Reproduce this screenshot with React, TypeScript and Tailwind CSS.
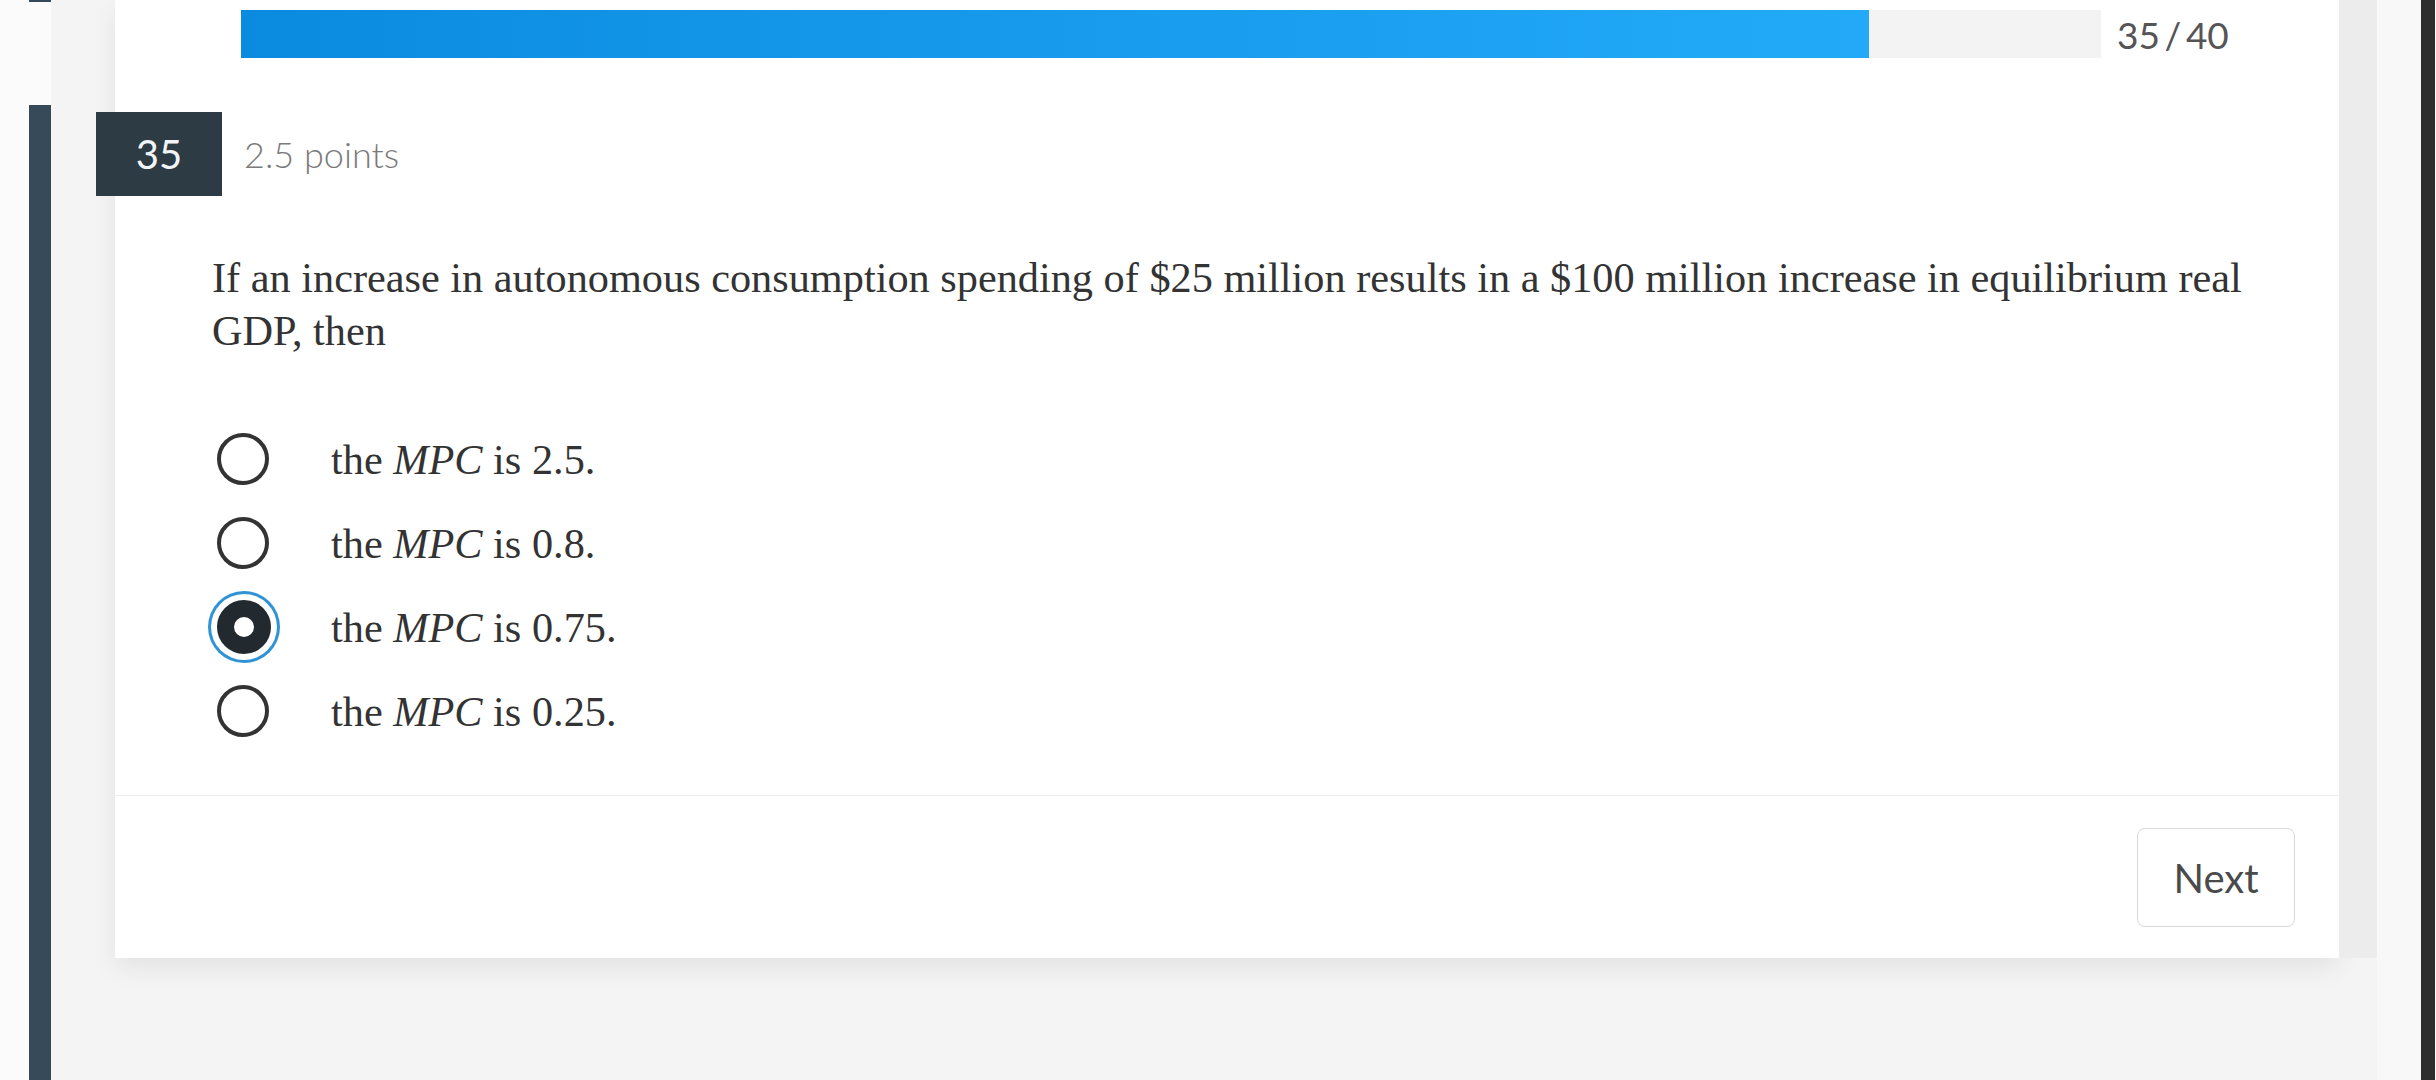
import React from 'react'

const options = [
  { id: 'a', value: '2.5', checked: false },
  { id: 'b', value: '0.8', checked: false },
  { id: 'c', value: '0.75', checked: true },
  { id: 'd', value: '0.25', checked: false },
]

const Radio: React.FC<{ checked: boolean }> = ({ checked }) =>
  checked ? (
    <span className="block h-[54px] w-[54px] shrink-0 rounded-full border-[17px] border-[#222a30] bg-white shadow-[0_0_0_6px_#ffffff,0_0_0_9px_#2f93d6]" />
  ) : (
    <span className="block h-[52px] w-[52px] shrink-0 rounded-full border-[4px] border-[#333333] bg-white" />
  )

export default function App() {
  const answered = 35
  const total = 40

  return (
    <div className="flex h-[1080px] w-[2436px] overflow-hidden bg-[#fbfbfb] font-['Lato',sans-serif]">
      {/* left strip */}
      <div className="w-[29px] shrink-0" />
      <div className="flex w-[22px] shrink-0 flex-col">
        <div className="h-[2px] bg-[#374a5a]" />
        <div className="h-[103px]" />
        <div className="flex-1 bg-[#374a5a]" />
      </div>

      {/* main area */}
      <main className="flex w-[2326px] shrink-0 items-start bg-[#f4f4f4] pl-[64px]">
        <div className="flex items-stretch">
          <div className="flex w-[2224px] flex-col bg-white shadow-[0_10px_24px_rgba(0,0,0,0.07)]">
            <div className="pb-[42px] pl-[97px] pr-[44px] pt-[10px]">
              {/* progress */}
              <div className="ml-[29px] flex h-[48px] items-center gap-[16px]">
                <div className="h-[48px] w-[1860px] bg-[#f3f3f3]">
                  <div
                    className="h-full bg-gradient-to-r from-[#0a8be0] to-[#22aaf8]"
                    style={{ width: `${(answered / total) * 100}%` }}
                  />
                </div>
                <span className="text-[37px] leading-none text-[#555555]">
                  {answered}&thinsp;/&thinsp;{total}
                </span>
              </div>

              {/* question header */}
              <div className="-ml-[116px] mt-[54px] flex h-[84px] items-center gap-[22px]">
                <div className="flex h-[84px] w-[126px] items-center justify-center bg-[#2d3b45] text-[40px] leading-none text-[#f2f5f7]">
                  35
                </div>
                <span className="text-[36px] font-light leading-none text-[#7a7a7a]">2.5 points</span>
              </div>

              {/* question text */}
              <p className="mt-[55px] font-['Liberation_Serif',serif] text-[42.3px] leading-[53px] text-[#333333]">
                If an increase in autonomous consumption spending of $25 million results in a $100 million increase in
                equilibrium real GDP, then
              </p>

              {/* answers */}
              <div className="ml-[5px] mt-[60px] flex flex-col">
                {options.map((o) => (
                  <label key={o.id} className="flex h-[84px] items-center gap-[62px]">
                    <Radio checked={o.checked} />
                    <span className={`font-['Liberation_Serif',serif] text-[42.3px] leading-[53px] text-[#333333] ${o.checked ? '-ml-[2px]' : ''}`}>
                      the <i>MPC</i> is {o.value}.
                    </span>
                  </label>
                ))}
              </div>
            </div>

            {/* footer */}
            <div className="flex justify-end border-t border-[#eeeeee] pb-[31px] pr-[44px] pt-[32px]">
              <button className="h-[99px] w-[158px] rounded-[8px] border border-[#d9d9d9] bg-white text-[40px] text-[#4a4a4a]">
                Next
              </button>
            </div>
          </div>
          <div className="w-[38px] bg-[#ececec]" />
        </div>
      </main>

      {/* right edge */}
      <div className="w-[44px] shrink-0 bg-[#f8f8f8]" />
      <div className="w-[14px] shrink-0 bg-[#2f2f2f]" />
    </div>
  )
}
